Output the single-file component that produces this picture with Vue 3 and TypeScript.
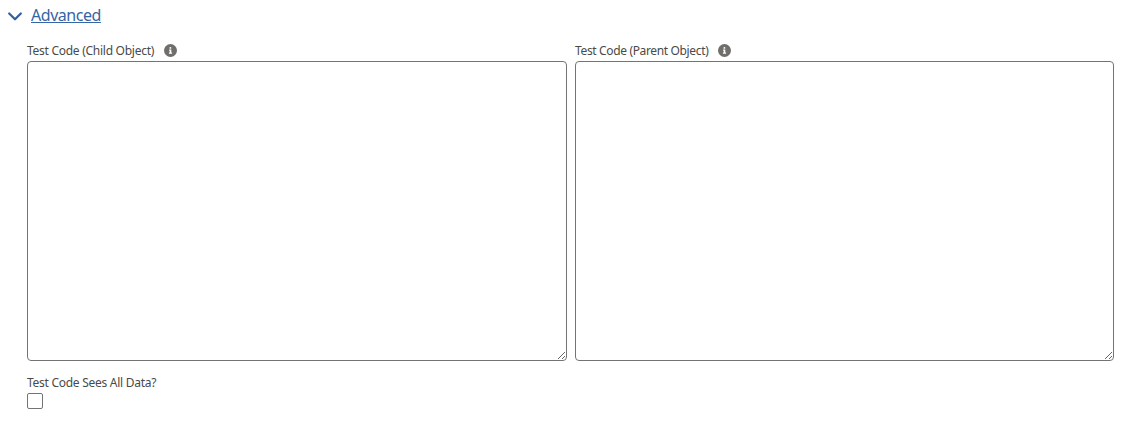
<script setup lang="ts">
import { ref } from 'vue'

interface CodeField {
  id: string
  label: string
}

const fields: CodeField[] = [
  { id: 'child', label: 'Test Code (Child Object)' },
  { id: 'parent', label: 'Test Code (Parent Object)' },
]
const values = ref<Record<string, string>>({ child: '', parent: '' })
const seesAll = ref(false)
</script>

<template>
  <section class="page">
    <header class="heading">
      <svg class="chevron" viewBox="0 0 14 9"><path d="M1.2 1.500 7 7.300l5.800-5.800" /></svg>
      <a class="title">Advanced</a>
    </header>
    <div class="fields">
      <div v-for="f in fields" :key="f.id" class="field">
        <div class="label-row">
          <label :for="f.id" :class="['label', f.id]">{{ f.label }}</label>
          <svg class="info" viewBox="0 0 13 13">
            <circle cx="6.500" cy="6.500" r="6.500" fill="#706e6b" />
            <circle cx="6.400" cy="3.900" r=".95" fill="#fff" />
            <path d="M5.100 5.600h2.200v3h.8v1.100H4.900V8.600h.8V6.700h-.6z" fill="#fff" />
          </svg>
        </div>
        <textarea :id="f.id" v-model="values[f.id]" class="area"></textarea>
      </div>
    </div>
    <div class="check">
      <label for="sees" class="label">Test Code Sees All Data?</label>
      <input id="sees" v-model="seesAll" type="checkbox" class="box" />
    </div>
  </section>
</template>

<style>
body { margin: 0; background: #fff; }
</style>

<style scoped>
.page { box-sizing: border-box; height: 422px; padding: 5px 32px 0 8px; font-family: "Noto Sans", "Open Sans", sans-serif; color: #4a4a48; }
.heading { display: flex; align-items: center; height: 22px; }
.chevron { width: 14px; height: 9px; margin-right: 9px; fill: none; stroke: #315f9f; stroke-width: 2.2; stroke-linecap: round; stroke-linejoin: round; }
.title { margin-top: -2px; color: #3565a5; font-size: 16px; line-height: 22px; letter-spacing: -0.46px; text-decoration: underline; text-decoration-thickness: 1px; text-underline-offset: 1px; text-decoration-skip-ink: none; }
.fields { display: grid; grid-template-columns: 540px 539px; gap: 8px; margin: 15px 0 0 19px; }
.label-row { display: flex; height: 17px; padding-bottom: 2px; align-items: center; }
.label { font-size: 12px; line-height: 18px; letter-spacing: -0.27px; white-space: nowrap; }
.parent { letter-spacing: -0.35px; }
.info { width: 13px; height: 13px; margin-left: 9.500px; }
.area { display: block; box-sizing: border-box; width: 100%; height: 300px; margin: 0; border: 1px solid #747474; border-radius: 4px; background: #fff; resize: vertical; outline: none; }
.check { display: flex; flex-direction: column; margin: 13px 0 0 19px; }
.box { appearance: none; box-sizing: border-box; width: 16px; height: 16px; margin: 1px 0 0; border: 1px solid #747474; border-radius: 2px; background: #fff; }
</style>
